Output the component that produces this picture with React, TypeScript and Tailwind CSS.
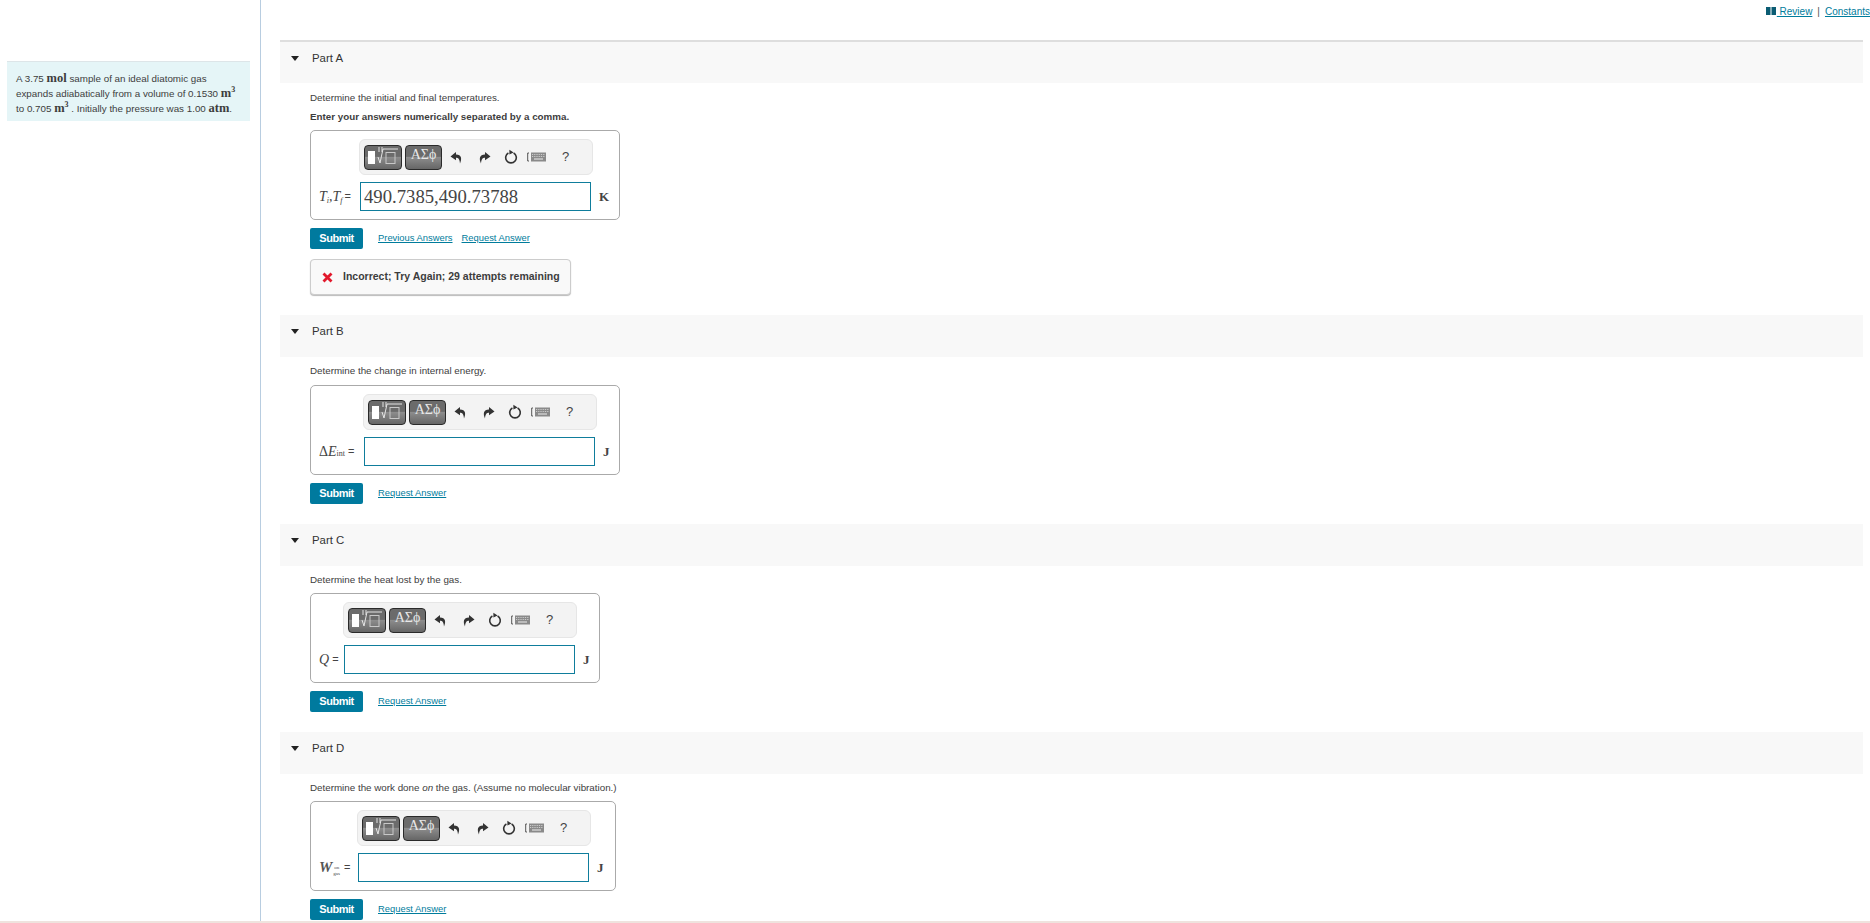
import React from 'react';

const serif = "font-['Liberation_Serif',serif]";

const UndoIcon = ({ flip = false }: { flip?: boolean }) => (
  <svg width="13" height="13" viewBox="0 0 13 13" className={flip ? '-scale-x-100' : ''}>
    <path d="M6 1 L0.5 5.4 L6 9.2 L6 6.8 C8.4 6.8 9.6 8 10 12.5 C12 8 11.8 3.7 6 3.6 Z" fill="#333" />
  </svg>
);

const ResetIcon = () => (
  <svg width="14" height="16" viewBox="0 0 14 16" fill="none">
    <path d="M4.4 4 A5.3 5.3 0 1 0 9.6 4" stroke="#333" strokeWidth="1.6" />
    <path d="M5.4 0.8 L9.6 3.4 L5.4 5.6 Z" fill="#333" />
  </svg>
);

const KeyboardIcon = () => (
  <svg width="19" height="10" viewBox="0 0 19 10" fill="none">
    <path d="M2 1 H0.7 V9 H2" stroke="#555" strokeWidth="1" />
    <rect x="4" y="0.5" width="15" height="9" fill="#8a8a8a" />
    <path d="M5 2.5 H18 M5 4.5 H18" stroke="#ddd" strokeWidth="0.8" strokeDasharray="1 0.8" />
    <path d="M7 7 H16" stroke="#ddd" strokeWidth="1.2" />
  </svg>
);

const Toolbar = () => (
  <div className="flex items-center h-[36px] w-[234px] -ml-px pl-[4px] bg-[#f3f3f3] border border-[#e6e6e6] rounded-[6px]">
    <div className="flex items-center w-[38px] h-[25px] pl-[3px] rounded-[4px] border border-[#2a2a2a] bg-[linear-gradient(#6b6b6b_0%,#6b6b6b_45%,#8c8c8c_50%,#666_100%)]">
      <div className="w-[7px] h-[13px] bg-white" />
      <svg width="22" height="19" viewBox="0 0 22 19" fill="none" className="ml-[2px] -mt-[3px]">
        <path d="M1 11 L3 17 L6 3 H21" stroke="#e4e4e4" strokeWidth="1" />
        <path d="M2 1 V6 M5 1 V6" stroke="#e4e4e4" strokeWidth="1" />
        <rect x="9" y="6.5" width="9" height="11" stroke="#c8c8c8" strokeWidth="1" />
      </svg>
    </div>
    <div className={`ml-[3px] w-[37px] h-[25px] rounded-[4px] border border-[#2a2a2a] bg-[linear-gradient(#6b6b6b_0%,#6b6b6b_45%,#8c8c8c_50%,#666_100%)] text-[#e8e8e8] text-[14px] leading-[17px] text-center ${serif}`}>
      ΑΣϕ
    </div>
    <div className="ml-[8px] w-[13px]"><UndoIcon /></div>
    <div className="ml-[15px] w-[13px]"><UndoIcon flip /></div>
    <div className="ml-[13px] w-[14px]"><ResetIcon /></div>
    <div className="ml-[9px] w-[19px]"><KeyboardIcon /></div>
    <span className="ml-[16px] text-[13px] text-[#444] font-['Liberation_Sans',sans-serif]">?</span>
  </div>
);

type AnswerBoxProps = {
  label: React.ReactNode;
  unit: string;
  value?: string;
  labelWidth: string;
  unitWidth: string;
};

const AnswerBox = ({ label, unit, value, labelWidth, unitWidth }: AnswerBoxProps) => (
  <div className="w-fit mt-[5px] border border-[#aaa] rounded-[5px] bg-white pl-[8px] pt-[8px] pb-[8px]">
    <div className="flex">
      <div className={`${labelWidth} shrink-0`} />
      <Toolbar />
    </div>
    <div className="flex items-center mt-[7px]">
      <div className={`${labelWidth} shrink-0 flex items-center text-[#444] text-[14px] ${serif}`}>{label}</div>
      <div className={`w-[231px] h-[29px] border border-[#0f7d9c] pl-[3px] text-[18.7px] leading-[27px] text-[#444] ${serif}`}>
        {value}
      </div>
      <div className={`${unitWidth} pl-[8px] font-bold text-[13px] text-[#444] ${serif}`}>{unit}</div>
    </div>
  </div>
);

const Actions = ({ previous = false }: { previous?: boolean }) => (
  <div className="flex items-center mt-[8px] h-[21px]">
    <button className="w-[53px] h-[21px] bg-[#007a9e] rounded-[2px] text-white font-bold text-[11px] tracking-[-0.5px]">
      Submit
    </button>
    {previous && <a className="ml-[15px] text-[#007c9c] underline text-[9.4px]">Previous Answers</a>}
    <a className={`${previous ? 'ml-[9px]' : 'ml-[15px]'} text-[#007c9c] underline text-[9.4px]`}>Request Answer</a>
  </div>
);

const PartHeader = ({ name, first = false }: { name: string; first?: boolean }) => (
  <div className={`flex items-center mr-[7px] pl-[11px] bg-[#f8f8f8] ${first ? 'h-[43px] border-t-2 border-[#dedede]' : 'h-[42px]'}`}>
    <svg width="8" height="5" viewBox="0 0 8 5" className="mb-[9px]"><path d="M0 0 H8 L4 5 Z" fill="#222" /></svg>
    <span className="ml-[13px] text-[11.4px] text-[#333] mb-[8px]">{name}</span>
  </div>
);

const Prompt = ({ children, bold = false }: { children: React.ReactNode; bold?: boolean }) => (
  <p className={`h-[16px] leading-[16px] text-[9.8px] text-[#3d3d3d] ${bold ? 'font-bold' : ''}`}>{children}</p>
);

const App: React.FC = () => {
  return (
    <div className="flex w-[1870px] h-[923px] overflow-hidden bg-white border-b-2 border-[#efe3de] font-['Liberation_Sans',sans-serif]">
      {/* Problem statement */}
      <aside className="w-[261px] shrink-0 border-r border-[#b8cde0] pt-[61px] pl-[7px] pr-[10px]">
        <div className="h-[60px] bg-[#e5f5f7] border-t border-[#dde5e8] pl-[9px] pt-[9px] text-[9.8px] leading-[14px] text-[#3d3d3d]">
          <p>A 3.75 <span className={`text-[12.5px] font-bold ${serif}`}>mol</span> sample of an ideal diatomic gas</p>
          <p>expands adiabatically from a volume of 0.1530 <span className={`text-[12.5px] font-bold ${serif}`}>m<sup className="text-[8px] -top-[5px]">3</sup></span></p>
          <p>to 0.705 <span className={`text-[12.5px] font-bold ${serif}`}>m<sup className="text-[8px] -top-[5px]">3</sup></span> . Initially the pressure was 1.00 <span className={`text-[12.5px] font-bold ${serif}`}>atm</span>.</p>
        </div>
      </aside>

      <main className="flex-1 pl-[19px]">
        <div className="h-[40px] flex justify-end items-start pt-[6px] text-[10px] leading-[12px]">
          <svg width="10" height="8" viewBox="0 0 10 8" className="mt-[1px]"><path d="M0 0 H4.5 V8 H0 Z M5.5 0 H10 V8 H5.5 Z" fill="#0b5c73" /></svg>
          <a className="ml-[1px] text-[#007c9c] underline">&nbsp;Review</a>
          <span className="mx-[5px] text-[#555]">|</span>
          <a className="text-[#007c9c] underline">Constants</a>
        </div>

        {/* Part A */}
        <PartHeader name="Part A" first />
        <section className="pl-[30px] pb-[20px]">
          <div className="pt-[7px]"><Prompt>Determine the initial and final temperatures.</Prompt></div>
          <div className="pt-[3px]"><Prompt bold>Enter your answers numerically separated by a comma.</Prompt></div>
          <AnswerBox
            labelWidth="w-[41px]"
            unitWidth="w-[28px]"
            value="490.7385,490.73788"
            unit="K"
            label={<><i>T<sub className="text-[8px]">i</sub>,T<sub className="text-[8px]">f</sub></i><span className="ml-[2px] font-['Liberation_Sans',sans-serif] text-[11px]">=</span></>}
          />
          <Actions previous />
          <div className="flex items-center w-[261px] h-[36px] mt-[10px] pl-[11px] bg-[#f9f9f9] border border-[#ccc] rounded-[4px] shadow-[0_1px_1px_#bbb]">
            <svg width="11" height="11" viewBox="0 0 11 11"><path d="M1.5 1.5 L9.5 9.5 M9.5 1.5 L1.5 9.5" stroke="#e2192c" strokeWidth="2.8" /></svg>
            <span className="ml-[10px] text-[10.5px] font-bold text-[#3d3d3d]">Incorrect; Try Again; 29 attempts remaining</span>
          </div>
        </section>

        {/* Part B */}
        <PartHeader name="Part B" />
        <section className="pl-[30px] pb-[20px]">
          <div className="pt-[6px] pb-px"><Prompt>Determine the change in internal energy.</Prompt></div>
          <AnswerBox
            labelWidth="w-[45px]"
            unitWidth="w-[24px]"
            unit="J"
            label={<><span>Δ</span><i>E</i><sub className="text-[8px]">int</sub><span className="ml-[3px] font-['Liberation_Sans',sans-serif] text-[11px]">=</span></>}
          />
          <Actions />
        </section>

        {/* Part C */}
        <PartHeader name="Part C" />
        <section className="pl-[30px] pb-[20px]">
          <div className="pt-[6px]"><Prompt>Determine the heat lost by the gas.</Prompt></div>
          <AnswerBox
            labelWidth="w-[25px]"
            unitWidth="w-[24px]"
            unit="J"
            label={<><i>Q</i><span className="ml-[3px] font-['Liberation_Sans',sans-serif] text-[11px]">=</span></>}
          />
          <Actions />
        </section>

        {/* Part D */}
        <PartHeader name="Part D" />
        <section className="pl-[30px]">
          <div className="pt-[6px]"><Prompt>Determine the work done <i>on</i> the gas. (Assume no molecular vibration.)</Prompt></div>
          <AnswerBox
            labelWidth="w-[39px]"
            unitWidth="w-[26px]"
            unit="J"
            label={
              <>
                <i className="font-bold text-[#555] text-[15px]">W</i>
                <span className="flex flex-col items-center ml-px mt-[7px] text-[5px] leading-[6px]">
                  <span>on</span>
                  <span>gas</span>
                </span>
                <span className="ml-[4px] font-['Liberation_Sans',sans-serif] text-[11px]">=</span>
              </>
            }
          />
          <Actions />
        </section>
      </main>
    </div>
  );
};

export default App;
